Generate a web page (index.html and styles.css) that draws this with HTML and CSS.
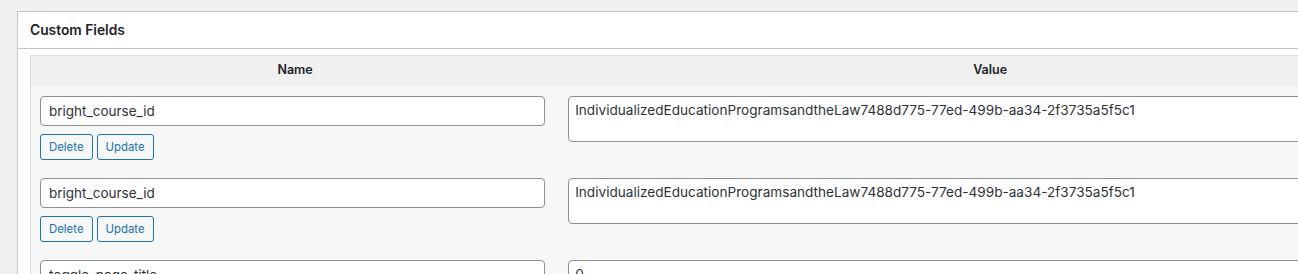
FILE: index.html
```html
<!DOCTYPE html>
<html lang="en">
<head>
    <meta charset="UTF-8">
    <meta name="viewport" content="width=device-width, initial-scale=1.0">
    <title>Custom Fields</title>
    <link rel="stylesheet" href="styles.css">
</head>
<body>
    <div class="postbox">
        <div class="postbox-header">
            <h2>Custom Fields</h2>
        </div>
        <div class="inside">
            <table class="list-table">
                <thead>
                    <tr>
                        <th class="left">Name</th>
                        <th>Value</th>
                    </tr>
                </thead>
                <tbody>
                    <tr>
                        <td class="left">
                            <input type="text" value="bright_course_id">
                            <div class="submit">
                                <button class="button">Delete</button>
                                <button class="button">Update</button>
                            </div>
                        </td>
                        <td><textarea rows="2">IndividualizedEducationProgramsandtheLaw7488d775-77ed-499b-aa34-2f3735a5f5c1</textarea></td>
                    </tr>
                    <tr>
                        <td class="left">
                            <input type="text" value="bright_course_id">
                            <div class="submit">
                                <button class="button">Delete</button>
                                <button class="button">Update</button>
                            </div>
                        </td>
                        <td><textarea rows="2">IndividualizedEducationProgramsandtheLaw7488d775-77ed-499b-aa34-2f3735a5f5c1</textarea></td>
                    </tr>
                    <tr>
                        <td class="left">
                            <input type="text" value="toggle_page_title">
                            <div class="submit">
                                <button class="button">Delete</button>
                                <button class="button">Update</button>
                            </div>
                        </td>
                        <td><textarea rows="2">0</textarea></td>
                    </tr>
                </tbody>
            </table>
        </div>
    </div>
</body>
</html>
```

FILE: styles.css
```css
body {
    margin: 0;
    padding: 11px 0 0 17px;
    height: 274px;
    overflow: hidden;
    background: #f0f0f1;
    color: #1d2327;
    font-family: Inter, "Noto Sans", sans-serif;
    font-size: 13px;
}
.postbox {
    width: 1416px;
    background: #fff;
    border: 1px solid #c3c4c7;
}
.postbox-header {
    border-bottom: 1px solid #c3c4c7;
}
.postbox-header h2 {
    margin: 0;
    padding: 8px 12px;
    font-size: 13.8px;
    font-weight: 600;
    line-height: 20px;
}
.inside {
    margin-top: 6px;
    padding: 0 12px 12px;
}
.list-table {
    width: 100%;
    border: 1px solid #dcdcde;
    border-spacing: 0;
    background: #f6f7f7;
}
.list-table th {
    padding: 5px 8px 8px;
    background: #f0f0f1;
    font-size: 12.5px;
    font-weight: 600;
    line-height: 18px;
    text-align: center;
}
.list-table td {
    padding: 1px;
    vertical-align: top;
}
.list-table .left {
    width: 38%;
}
.list-table input,
.list-table textarea {
    display: block;
    box-sizing: border-box;
    width: 96%;
    margin: 8px;
    border: 1px solid #8c8f94;
    border-radius: 4px;
    background: #fff;
    color: #2c3338;
    font-family: Inter, "Noto Sans", sans-serif;
}
.list-table input {
    height: 30px;
    padding: 0 8px;
    font-size: 13.5px;
}
.list-table textarea {
    height: 46px;
    padding: 4px 6px;
    font-size: 13.6px;
    line-height: 18px;
    resize: none;
}
.submit {
    display: flex;
    gap: 4px;
    padding: 0 8px 8px;
}
.button {
    height: 26px;
    padding: 0 8px;
    border: 1px solid #2271b1;
    border-radius: 3px;
    background: #f6f7f7;
    color: #2271b1;
    font-family: Inter, "Noto Sans", sans-serif;
    font-size: 11.4px;
}
```
